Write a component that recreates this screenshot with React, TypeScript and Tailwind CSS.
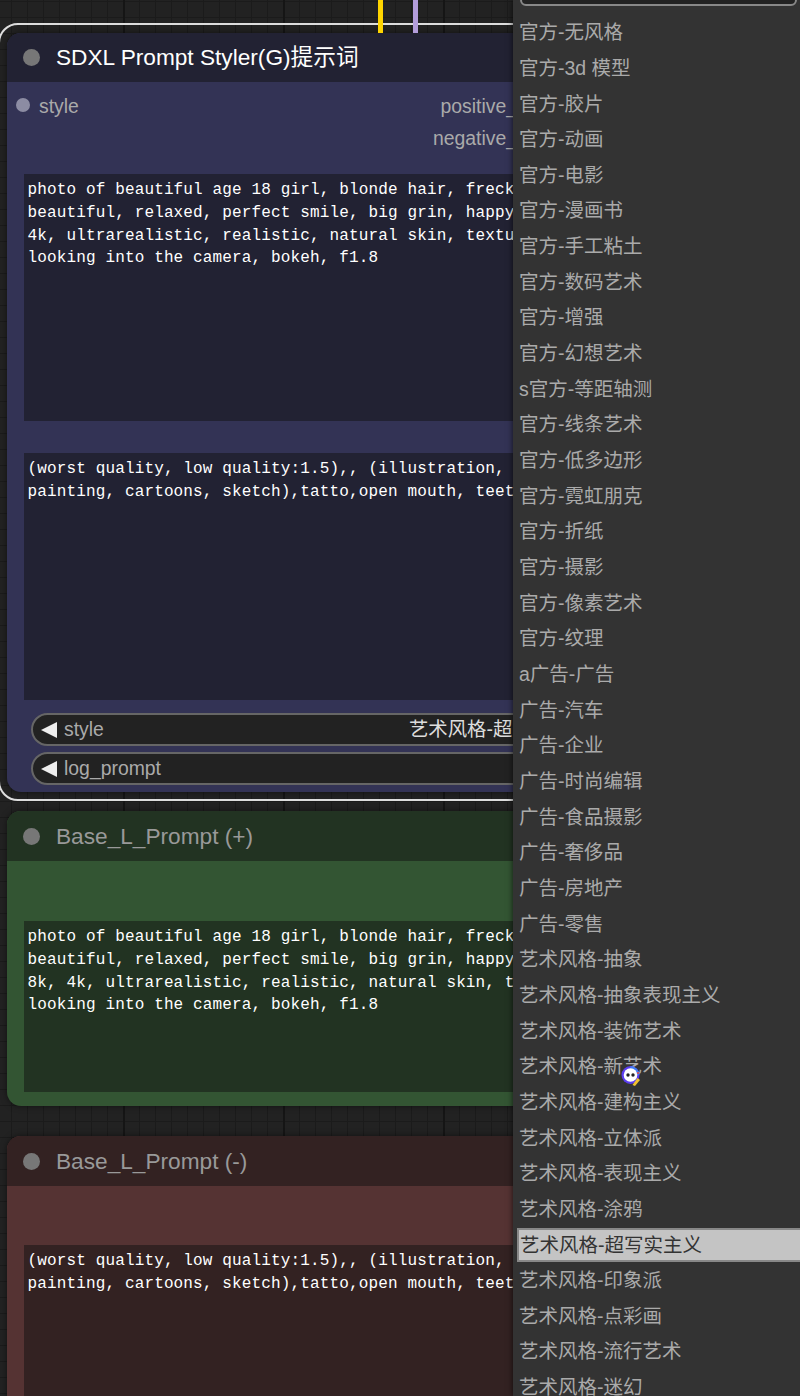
const styles = ["官方-无风格","官方-3d 模型","官方-胶片","官方-动画","官方-电影","官方-漫画书","官方-手工粘土","官方-数码艺术","官方-增强","官方-幻想艺术","s官方-等距轴测","官方-线条艺术","官方-低多边形","官方-霓虹朋克","官方-折纸","官方-摄影","官方-像素艺术","官方-纹理","a广告-广告","广告-汽车","广告-企业","广告-时尚编辑","广告-食品摄影","广告-奢侈品","广告-房地产","广告-零售","艺术风格-抽象","艺术风格-抽象表现主义","艺术风格-装饰艺术","艺术风格-新艺术","艺术风格-建构主义","艺术风格-立体派","艺术风格-表现主义","艺术风格-涂鸦","艺术风格-超写实主义","艺术风格-印象派","艺术风格-点彩画","艺术风格-流行艺术","艺术风格-迷幻"];

const positiveBlue = "photo of beautiful age 18 girl, blonde hair, freck\nbeautiful, relaxed, perfect smile, big grin, happy\n4k, ultrarealistic, realistic, natural skin, textu\nlooking into the camera, bokeh, f1.8";
const positiveGreen = "photo of beautiful age 18 girl, blonde hair, freck\nbeautiful, relaxed, perfect smile, big grin, happy\n8k, 4k, ultrarealistic, realistic, natural skin, t\nlooking into the camera, bokeh, f1.8";
const negative = "(worst quality, low quality:1.5),, (illustration,\npainting, cartoons, sketch),tatto,open mouth, teet";

function Prompt({ text, className }: { text: string; className: string }) {
  return (
    <div className={`ml-[17px] px-[3.5px] pt-[5px] whitespace-pre overflow-hidden font-['Liberation_Mono',monospace] text-[16px] tracking-[0.14px] leading-[22.8px] text-white ${className}`}>
      {text}
    </div>
  );
}

function Title({ label, className, textClass }: { label: string; className: string; textClass: string }) {
  return (
    <div className={`rounded-t-[14px] flex items-center ${className}`}>
      <span className="ml-[16px] w-[17px] h-[17px] rounded-full bg-[#777]" />
      <span className={`ml-[16px] mt-[-1px] text-[22.67px] ${textClass}`}>{label}</span>
    </div>
  );
}

function Pill({ label, value }: { label: string; value?: string }) {
  return (
    <div className="ml-[24px] h-[33px] w-[700px] rounded-full border-2 border-[#666] bg-[#222] flex items-center text-[19.4px] text-[#aaa]">
      <span className="ml-[8px] w-0 h-0 border-y-[8px] border-y-transparent border-r-[16px] border-r-[#eee]" />
      <span className="ml-[7px]">{label}</span>
      {value && <span className="ml-[305px] w-[103px] overflow-hidden text-[#ddd] whitespace-nowrap">{value}</span>}
    </div>
  );
}

export default function App() {
  return (
    <div className="relative w-[800px] h-[1396px] overflow-hidden font-['Liberation_Sans','Noto_Sans_CJK_SC',sans-serif] bg-[#222] bg-[linear-gradient(90deg,#151515_2px,transparent_2px),linear-gradient(#1b1b1b_1px,transparent_1px),linear-gradient(90deg,#1b1b1b_1px,transparent_1px)] bg-[size:160px_160px,16px_16px,16px_16px] bg-[position:123px_0,0_1px,11px_0]">
      <div className="pt-[23px]">
        <div className="ml-[-2px] w-[900px] h-[778px] pt-[8px] pl-[7px] border-2 border-[#ddd] rounded-[20px]">
          <div className="w-[850px] h-[759px] rounded-[14px] bg-[#335] shadow-[0_0_6px_rgba(0,0,0,0.5)]">
            <Title label="SDXL Prompt Styler(G)提示词" className="h-[49px] bg-[#223]" textClass="text-white" />
            <div className="flex justify-between w-[510px] pt-[8px] h-[32px] text-[19.4px] text-[#aaa]">
              <div className="flex items-center h-[32px]">
                <span className="ml-[9px] mt-[-2px] w-[14px] h-[14px] rounded-full bg-[#8c8ca3]" />
                <span className="ml-[9px] mt-[2px]">style</span>
              </div>
              <span className="h-[32px] leading-[32px]">positive_</span>
            </div>
            <div className="flex justify-end w-[510px] pt-[8px] h-[41px] text-[19.4px] text-[#aaa] leading-[32px]">negative_</div>
            <div className="h-[19px]" />
            <Prompt text={positiveBlue} className="h-[247px] bg-[#223]" />
            <div className="h-[32px]" />
            <Prompt text={negative} className="h-[247px] bg-[#223]" />
            <div className="h-[13px]" />
            <Pill label="style" value="艺术风格-超写实主义" />
            <div className="h-[6px]" />
            <Pill label="log_prompt" />
          </div>
        </div>

        <div className="mt-[10px] ml-[7px] w-[850px] h-[295px] rounded-[14px] bg-[#353] shadow-[0_0_6px_rgba(0,0,0,0.5)]">
          <Title label="Base_L_Prompt (+)" className="h-[50px] bg-[#232]" textClass="text-[#999]" />
          <div className="h-[60px]" />
          <Prompt text={positiveGreen} className="h-[171px] bg-[#232]" />
        </div>

        <div className="mt-[30px] ml-[7px] w-[850px] h-[300px] rounded-t-[14px] bg-[#533] shadow-[0_0_6px_rgba(0,0,0,0.5)]">
          <Title label="Base_L_Prompt (-)" className="h-[50px] bg-[#322]" textClass="text-[#999]" />
          <div className="h-[59px]" />
          <Prompt text={negative} className="h-[200px] bg-[#322]" />
        </div>
      </div>

      <div className="absolute left-[378px] top-0 w-[5px] h-[33px] bg-[#ffd500]" />
      <div className="absolute left-[413px] top-0 w-[5px] h-[33px] bg-[#b39ddb]" />

      <div className="absolute left-[513px] top-0 w-[287px] h-[1396px] bg-[#333] shadow-[0_0_6px_rgba(0,0,0,0.7)] overflow-hidden">
        <div className="ml-[7px] mt-[-20px] w-[277px] h-[26px] rounded-[6px] border-2 border-[#888] bg-[#222]" />
        <div className="mt-[9px] flex flex-col">
          {styles.map((s) => {
            const active = s === "艺术风格-超写实主义";
            return (
              <div
                key={s}
                className={`shrink-0 flex items-center text-[19.5px] whitespace-nowrap ${active ? "h-[33.67px] my-[1px] ml-[4px] pl-[1px] bg-[#c4c4c4] text-[#333] border-y-2 border-l-2 border-[#888]" : "h-[35.67px] pl-[6px] text-[#aaa]"}`}
              >
                {s}
              </div>
            );
          })}
        </div>
        <svg className="absolute left-[107px] top-[1064px]" width="24" height="24" viewBox="0 0 24 24">
          <circle cx="10.5" cy="11" r="9" fill="#5b3df0" />
          <path d="M10.5 2 A9 9 0 0 1 19.5 11 L10.5 11 Z" fill="#3f7bf5" />
          <circle cx="10.5" cy="11" r="6.8" fill="#fff" />
          <circle cx="8" cy="11" r="1.7" fill="#222" />
          <circle cx="13" cy="11" r="1.7" fill="#222" />
          <path d="M12.5 21 L17.5 14 L20 16 L15 22 Z" fill="#f2c230" />
          <circle cx="18" cy="9" r="1" fill="#e44" />
        </svg>
      </div>
    </div>
  );
}
